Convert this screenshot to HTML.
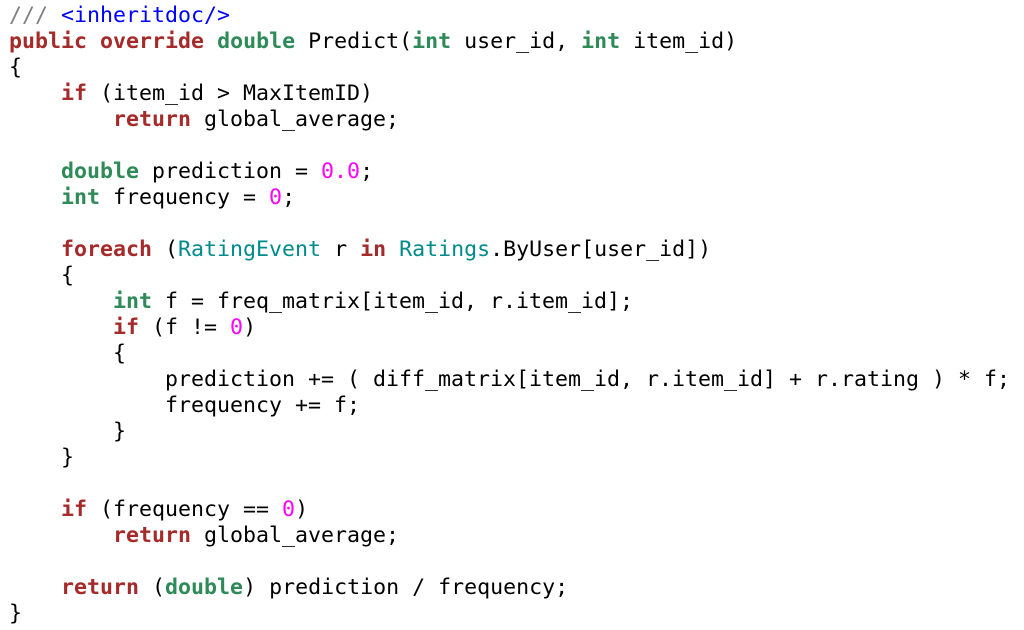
<!DOCTYPE html>
<html><head><meta charset="utf-8"><style>
html,body{margin:0;padding:0;background:#fff;width:1024px;height:630px;overflow:hidden}
pre{margin:0;position:absolute;left:9px;top:3px;font-family:"DejaVu Sans Mono","Liberation Mono",monospace;font-size:21.6px;line-height:26px;color:#000}
.k{color:#a52a2a;font-weight:bold}
.t{color:#2e8b57;font-weight:bold}
.n{color:#ff00ff}
.c{color:#808080}
.d{color:#0000ff}
.cl{color:#008b8b}
</style></head><body><pre><span class="c">///</span> <span class="d">&lt;inheritdoc/&gt;</span>
<span class="k">public</span> <span class="k">override</span> <span class="t">double</span> Predict(<span class="t">int</span> user_id, <span class="t">int</span> item_id)
{
    <span class="k">if</span> (item_id &gt; MaxItemID)
        <span class="k">return</span> global_average;

    <span class="t">double</span> prediction = <span class="n">0.0</span>;
    <span class="t">int</span> frequency = <span class="n">0</span>;

    <span class="k">foreach</span> (<span class="cl">RatingEvent</span> r <span class="k">in</span> <span class="cl">Ratings</span>.ByUser[user_id])
    {
        <span class="t">int</span> f = freq_matrix[item_id, r.item_id];
        <span class="k">if</span> (f != <span class="n">0</span>)
        {
            prediction += ( diff_matrix[item_id, r.item_id] + r.rating ) * f;
            frequency += f;
        }
    }

    <span class="k">if</span> (frequency == <span class="n">0</span>)
        <span class="k">return</span> global_average;

    <span class="k">return</span> (<span class="t">double</span>) prediction / frequency;
}</pre></body></html>
